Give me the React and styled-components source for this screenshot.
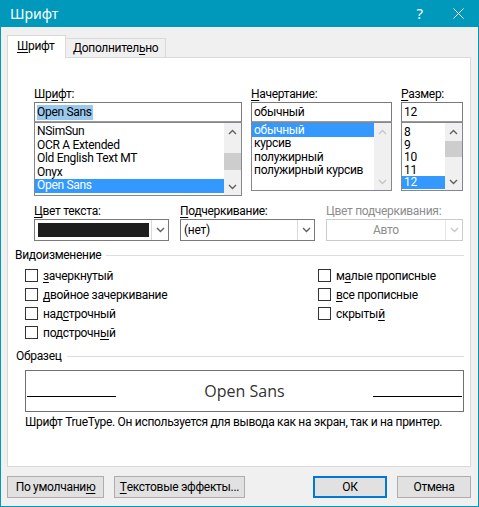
import React from "react";
import styled, { createGlobalStyle } from "styled-components";

const GlobalStyle = createGlobalStyle`
  html, body {
    margin: 0;
    padding: 0;
    background: #ffffff;
  }
  body {
    font-family: Roboto, "Noto Sans", "Liberation Sans", sans-serif;
    font-size: 12px;
    letter-spacing: -0.3px;
    color: #000;
  }
`;

const Window = styled.div`
  width: 479px;
  height: 507px;
  box-sizing: border-box;
  border: 1px solid #0099bc;
  border-top: none;
  background: #f0f0f0;
  display: flex;
  flex-direction: column;
`;

const TitleBar = styled.div`
  height: 27px;
  flex-shrink: 0;
  background: #0099bc;
  color: #fff;
  display: flex;
  align-items: center;
  padding-left: 9px;
  letter-spacing: 0;
`;

const Title = styled.div`
  flex: 1;
  font-family: "Noto Sans", sans-serif;
  font-size: 14px;
  line-height: 27px;
`;

const Help = styled.div`
  font-family: "Noto Sans", sans-serif;
  font-size: 15px;
  line-height: 27px;
  margin-right: 30px;
`;

const Close = styled.svg`
  margin-right: 14px;
`;

const Body = styled.div`
  flex: 1;
  display: flex;
  flex-direction: column;
  padding: 8px 7px 8px 6px;
`;

const TabRow = styled.div`
  display: flex;
  align-items: flex-end;
  height: 22px;
`;

const Tab = styled.div`
  position: relative;
  z-index: 1;
  box-sizing: border-box;
  height: ${(p) => (p.$active ? 23 : 19)}px;
  margin-bottom: ${(p) => (p.$active ? -1 : 0)}px;
  width: ${(p) => p.$w}px;
  background: ${(p) => (p.$active ? "#fff" : "#f0f0f0")};
  border: 1px solid #d9d9d9;
  border-bottom: none;
  border-left: ${(p) => (p.$active ? "1px solid #d9d9d9" : "none")};
  padding-left: ${(p) => p.$pl}px;
  line-height: ${(p) => (p.$active ? 21 : 18)}px;
`;

const Panel = styled.div`
  height: 410px;
  box-sizing: border-box;
  background: #fff;
  border: 1px solid #d9d9d9;
  display: flex;
  flex-direction: column;
  padding-top: 29px;
`;

const U = styled.span`
  text-decoration: underline;
  text-underline-offset: 2px;
`;

const TopGrid = styled.div`
  display: grid;
  grid-template-columns: 208px 141px 62px;
  column-gap: 9px;
  margin-left: 26px;
  align-items: start;
`;

const Column = styled.div`
  display: flex;
  flex-direction: column;
`;

const Label = styled.div`
  line-height: ${(p) => p.$lh || 15}px;
  height: ${(p) => p.$lh || 15}px;
  color: ${(p) => (p.$disabled ? "#8d8d8d" : "#000")};
  white-space: nowrap;
`;

const Input = styled.div`
  height: 20px;
  box-sizing: border-box;
  border: 1px solid #7a7a7a;
  border-bottom-color: #9a9a9a;
  padding-left: 2px;
  line-height: 18px;
  display: flex;
  align-items: center;
`;

const Selection = styled.span`
  background: #99c9ef;
  line-height: 15px;
  padding-right: 1px;
`;

const List = styled.div`
  height: ${(p) => p.$h}px;
  box-sizing: border-box;
  border: 1px solid #828790;
  display: flex;
  background: #fff;
`;

const Items = styled.div`
  flex: 1;
  min-width: 0;
  overflow: hidden;
  padding-top: ${(p) => p.$pt || 0}px;
`;

const Item = styled.div`
  height: ${(p) => p.$h || 13.5}px;
  line-height: ${(p) => p.$h || 13.5}px;
  padding-left: 2px;
  white-space: nowrap;
  background: ${(p) => (p.$selected ? "#3399ff" : "transparent")};
  color: ${(p) => (p.$selected ? "#fff" : "#000")};
`;

const ScrollBar = styled.div`
  width: 17px;
  flex-shrink: 0;
  background: #f0f0f0;
  display: flex;
  flex-direction: column;
`;

const Arrow = styled.div`
  height: 17px;
  display: flex;
  align-items: center;
  justify-content: center;
`;

const Track = styled.div`
  flex: 1;
`;

const Thumb = styled.div`
  margin-top: ${(p) => p.$top}px;
  height: ${(p) => p.$h}px;
  background: #cdcdcd;
`;

const RowGrid = styled.div`
  display: grid;
  grid-template-columns: 135px 135px 137px;
  column-gap: 11px;
  margin: 7px 0 0 26px;
`;

const Combo = styled.div`
  height: 22px;
  box-sizing: border-box;
  border: 1px solid ${(p) => (p.$disabled ? "#cccccc" : "#7a7a7a")};
  background: #fff;
  display: flex;
  align-items: stretch;
`;

const ComboValue = styled.div`
  flex: 1;
  line-height: 20px;
  padding-left: ${(p) => (p.$center ? 0 : 3)}px;
  text-align: ${(p) => (p.$center ? "center" : "left")};
  color: ${(p) => (p.$disabled ? "#8d8d8d" : "#000")};
`;

const Swatch = styled.div`
  flex: 1;
  margin: 3px 2px 3px 3px;
  background: #1e1e1e;
`;

const DropButton = styled.div`
  width: 16px;
  border-left: 1px solid ${(p) => (p.$disabled ? "#e6e6e6" : "#d9d9d9")};
  display: flex;
  align-items: center;
  justify-content: center;
`;

const SectionHeader = styled.div`
  display: flex;
  align-items: center;
  margin: ${(p) => p.$mt}px 6px 0 ${(p) => p.$ml}px;
  line-height: 15px;
`;

const Rule = styled.div`
  flex: 1;
  height: 1px;
  background: #dcdcdc;
  margin-left: 5px;
`;

const CheckGrid = styled.div`
  display: grid;
  grid-template-rows: repeat(4, 19px);
  grid-template-columns: 293px auto;
  grid-auto-flow: column;
  margin: 3px 0 0 17px;
`;

const CheckRow = styled.div`
  display: flex;
  align-items: center;
  gap: 5px;
`;

const Box = styled.div`
  width: 13px;
  height: 13px;
  box-sizing: border-box;
  border: 1px solid #333;
  background: #fff;
`;

const Preview = styled.div`
  height: 42px;
  box-sizing: border-box;
  margin: 6px 6px 0 17px;
  border: 1px solid #707070;
  display: flex;
  align-items: flex-start;
  padding: 0 1px;
`;

const BaseLine = styled.div`
  width: 89px;
  height: 1px;
  background: #000;
  margin-top: 25px;
`;

const PreviewText = styled.div`
  flex: 1;
  text-align: center;
  font-family: "Open Sans", sans-serif;
  font-size: 16px;
  letter-spacing: 0;
  line-height: 22px;
  margin-top: 9px;
  color: #333;
`;

const Description = styled.div`
  margin: 3px 0 0 17px;
  line-height: 15px;
  white-space: nowrap;
`;

const ButtonRow = styled.div`
  display: flex;
  margin-top: 9px;
  height: 22px;
`;

const Button = styled.div`
  width: ${(p) => p.$w}px;
  height: 22px;
  box-sizing: border-box;
  background: #e1e1e1;
  border: ${(p) => (p.$default ? "2px solid #0078d7" : "1px solid #adadad")};
  margin-left: ${(p) => (p.$auto ? "auto" : `${p.$ml || 0}px`)};
  display: flex;
  align-items: center;
  justify-content: center;
  white-space: nowrap;
`;

const Chevron = ({ dir = "down", color = "#606060" }) => (
  <svg width="9" height="6" viewBox="0 0 9 6">
    <polyline
      points={dir === "up" ? "1,5 4.5,1.5 8,5" : "1,1 4.5,4.5 8,1"}
      fill="none"
      stroke={color}
      strokeWidth="1.4"
    />
  </svg>
);

const Scroll = ({ thumbTop, thumbH, disabled }) => {
  const c = disabled ? "#c6c6c6" : "#606060";
  return (
    <ScrollBar>
      <Arrow>
        <Chevron dir="up" color={c} />
      </Arrow>
      <Track>{!disabled && <Thumb $top={thumbTop} $h={thumbH} />}</Track>
      <Arrow>
        <Chevron dir="down" color={c} />
      </Arrow>
    </ScrollBar>
  );
};

const fonts = ["NSimSun", "OCR A Extended", "Old English Text MT", "Onyx", "Open Sans"];
const styles = ["обычный", "курсив", "полужирный", "полужирный курсив"];
const sizes = ["8", "9", "10", "11", "12"];

const leftChecks = [
  [<U key="u">з</U>, "ачеркнутый"],
  [<U key="u">д</U>, "войное зачеркивание"],
  ["над", <U key="u">с</U>, "трочный"],
  ["подстрочн", <U key="u">ы</U>, "й"],
];
const rightChecks = [
  ["м", <U key="u">а</U>, "лые прописные"],
  [<U key="u">в</U>, "се прописные"],
  ["скрыты", <U key="u">й</U>],
];

const App = () => {
  return (
    <>
      <GlobalStyle />
      <Window>
        <TitleBar>
          <Title>Шрифт</Title>
          <Help>?</Help>
          <Close width="11" height="11" viewBox="0 0 11 11">
            <path d="M0.5 0.5 L10.5 10.5 M10.5 0.5 L0.5 10.5" stroke="#fff" strokeWidth="1" />
          </Close>
        </TitleBar>
        <Body>
          <TabRow>
            <Tab $active $w={59} $pl={9}>
              <U>Ш</U>рифт
            </Tab>
            <Tab $w={100} $pl={7}>
              Дополнител<U>ь</U>но
            </Tab>
          </TabRow>
          <Panel>
            <TopGrid>
              <Column>
                <Label>
                  Шр<U>и</U>фт:
                </Label>
                <Input>
                  <Selection>Open Sans</Selection>
                </Input>
                <List $h={74}>
                  <Items $pt={2}>
                    {fonts.map((f, i) => (
                      <Item key={f} $selected={i === 4}>
                        {f}
                      </Item>
                    ))}
                  </Items>
                  <Scroll thumbTop={13} thumbH={17} />
                </List>
              </Column>
              <Column>
                <Label>
                  <U>Н</U>ачертание:
                </Label>
                <Input>обычный</Input>
                <List $h={69}>
                  <Items>
                    {styles.map((s, i) => (
                      <Item key={s} $selected={i === 0} $h={i === 0 ? 14 : 13.5}>
                        {s}
                      </Item>
                    ))}
                  </Items>
                  <Scroll disabled />
                </List>
              </Column>
              <Column>
                <Label>
                  <U>Р</U>азмер:
                </Label>
                <Input>12</Input>
                <List $h={69}>
                  <Items $pt={3}>
                    {sizes.map((s, i) => (
                      <Item key={s} $selected={i === 4} $h={12.6}>
                        {s}
                      </Item>
                    ))}
                  </Items>
                  <Scroll thumbTop={1} thumbH={16} />
                </List>
              </Column>
            </TopGrid>

            <RowGrid>
              <Column>
                <Label $lh={16}>
                  <U>Ц</U>вет текста:
                </Label>
                <Combo>
                  <Swatch />
                  <DropButton>
                    <Chevron />
                  </DropButton>
                </Combo>
              </Column>
              <Column>
                <Label $lh={16}>
                  <U>П</U>одчеркивание:
                </Label>
                <Combo>
                  <ComboValue>(нет)</ComboValue>
                  <DropButton>
                    <Chevron />
                  </DropButton>
                </Combo>
              </Column>
              <Column>
                <Label $lh={16} $disabled>
                  Цвет подчеркивания:
                </Label>
                <Combo $disabled>
                  <ComboValue $center $disabled>
                    Авто
                  </ComboValue>
                  <DropButton $disabled>
                    <Chevron color="#c6c6c6" />
                  </DropButton>
                </Combo>
              </Column>
            </RowGrid>

            <SectionHeader $mt={7} $ml={7}>
              Видоизменение
              <Rule />
            </SectionHeader>
            <CheckGrid>
              {leftChecks.concat(rightChecks).map((parts, i) => (
                <CheckRow key={i}>
                  <Box />
                  <span>{parts}</span>
                </CheckRow>
              ))}
            </CheckGrid>

            <SectionHeader $mt={7} $ml={8}>
              Образец
              <Rule />
            </SectionHeader>
            <Preview>
              <BaseLine />
              <PreviewText>Open Sans</PreviewText>
              <BaseLine />
            </Preview>
            <Description>
              Шрифт TrueType. Он используется для вывода как на экран, так и на принтер.
            </Description>
          </Panel>
          <ButtonRow>
            <Button $w={97}>
              По умолчани<U>ю</U>
            </Button>
            <Button $w={131} $ml={10}>
              <U>Т</U>екстовые эффекты...
            </Button>
            <Button $w={74} $auto $default>
              ОК
            </Button>
            <Button $w={74} $ml={10}>
              Отмена
            </Button>
          </ButtonRow>
        </Body>
      </Window>
    </>
  );
};

export default App;
